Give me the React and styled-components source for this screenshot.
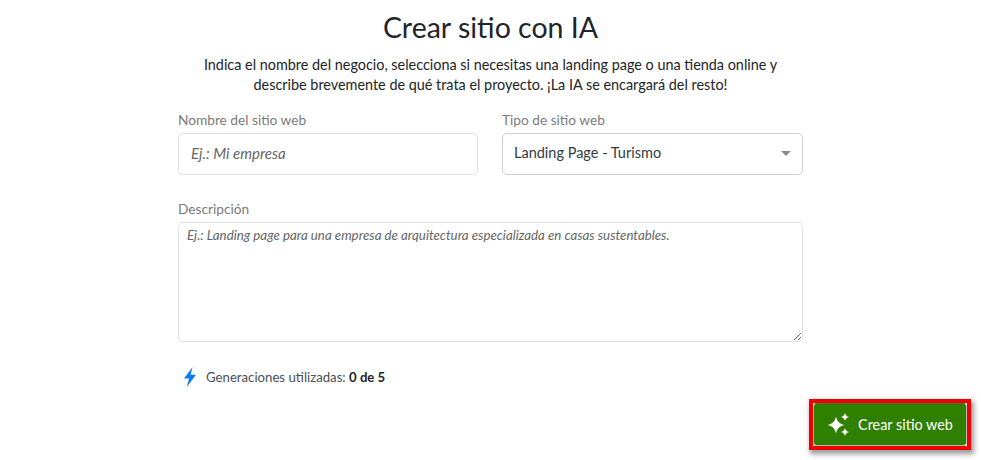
import React from "react";
import styled, { createGlobalStyle } from "styled-components";

const GlobalStyle = createGlobalStyle`
  html, body { margin: 0; padding: 0; background: #fff; }
  body { font-family: "Lato", "Open Sans", sans-serif; overflow: hidden; }
`;

const Page = styled.div`
  width: 981px;
  height: 460px;
  display: flex;
  flex-direction: column;
  align-items: center;
  padding-top: 8px;
  box-sizing: border-box;
`;

const Title = styled.h1`
  margin: 0;
  font-size: 28.5px;
  line-height: 38px;
  font-weight: 400;
  color: #212529;
`;

const Intro = styled.p`
  margin: 9px 0 0;
  width: 600px;
  text-align: center;
  font-size: 14.4px;
  line-height: 20px;
  color: #212529;
`;

const Form = styled.div`
  width: 625px;
  margin-top: 15px;
  display: flex;
  flex-direction: column;
`;

const Row = styled.div`
  display: grid;
  grid-template-columns: 300px 301px;
  column-gap: 24px;
`;

const Field = styled.div`
  display: flex;
  flex-direction: column;
`;

const Label = styled.label`
  font-size: 13.7px;
  line-height: 20px;
  color: #7b7b7b;
  margin-bottom: 3px;
`;

const TextInput = styled.input`
  height: 42px;
  box-sizing: border-box;
  border: 1px solid #dee2e6;
  border-radius: 5px;
  padding: 0 12px 3px;
  font: italic 15px "Lato", sans-serif;
  outline: none;
  &::placeholder { color: #666; opacity: 1; }
`;

const SelectBox = styled.div`
  height: 42px;
  box-sizing: border-box;
  border: 1px solid #ced0d6;
  border-radius: 5px;
  padding: 0 11px 3px;
  display: flex;
  align-items: center;
  justify-content: space-between;
  font-size: 14.5px;
  color: #343a40;
`;

const Caret = styled.span`
  width: 0;
  height: 0;
  margin-top: 1px;
  border-left: 5px solid transparent;
  border-right: 5px solid transparent;
  border-top: 5px solid #8a8a8a;
`;

const DescField = styled(Field)`
  margin-top: 24px;
`;

const TextArea = styled.textarea`
  height: 120px;
  box-sizing: border-box;
  border: 1px solid #dee2e6;
  border-radius: 5px;
  padding: 4px 8px;
  font: italic 13.3px "Lato", sans-serif;
  outline: none;
  display: block;
  &::placeholder { color: #666; opacity: 1; }
`;

const Usage = styled.div`
  display: flex;
  align-items: center;
  gap: 9px;
  margin-top: 25px;
  padding-left: 5px;
  font-size: 13.2px;
  line-height: 20px;
  color: #4a4f55;
  & b { font-weight: 700; color: #212529; }
`;

const Footer = styled.div`
  width: 100%;
  display: flex;
  justify-content: flex-end;
  padding-right: 10px;
  box-sizing: border-box;
  margin-top: 12px;
`;

// red highlight drawn round the button, square corners
const Highlight = styled.div`
  border: 4px solid #f00000;
  box-shadow: 2px 3px 5px 1px rgba(0, 0, 0, 0.4);
  display: flex;
`;

const GenerateButton = styled.button`
  width: 154px;
  height: 43px;
  box-sizing: border-box;
  display: flex;
  align-items: center;
  justify-content: center;
  gap: 8px;
  background: #2f8000;
  color: #fff;
  border: 1px solid #b9b9b9;
  border-top-color: #4c6b38;
  border-radius: 4px;
  font: 14.4px "Lato", sans-serif;
  padding: 0;
`;

const Bolt = () => (
  <svg width="14" height="20" viewBox="0 0 14 20">
    <path d="M9.5 0 L1 11.5 H6 L3.8 20 L13 7.8 H7.6 Z" fill="#0d7bf2" />
  </svg>
);

const Sparkles = () => (
  <svg width="23" height="23" viewBox="0 0 23 23" fill="#fff">
    <path d="M9 3.5 C10.2 8.6 12 10.4 17.5 12 C12 13.6 10.2 15.4 9 20.5 C7.8 15.4 6 13.6 0.5 12 C6 10.4 7.8 8.6 9 3.5 Z" />
    <path d="M18 0 C18.6 2.3 19.6 3.3 22.2 4 C19.6 4.7 18.6 5.7 18 8 C17.4 5.7 16.4 4.7 13.8 4 C16.4 3.3 17.4 2.3 18 0 Z" />
    <path d="M18 15 C18.6 17.3 19.6 18.3 22.2 19 C19.6 19.7 18.6 20.7 18 23 C17.4 20.7 16.4 19.7 13.8 19 C16.4 18.3 17.4 17.3 18 15 Z" />
  </svg>
);

const App = () => (
  <Page>
    <GlobalStyle />
    <Title>Crear sitio con IA</Title>
    <Intro>
      Indica el nombre del negocio, selecciona si necesitas una landing page o una tienda online y
      describe brevemente de qué trata el proyecto. ¡La IA se encargará del resto!
    </Intro>
    <Form>
      <Row>
        <Field>
          <Label>Nombre del sitio web</Label>
          <TextInput placeholder="Ej.: Mi empresa" />
        </Field>
        <Field>
          <Label>Tipo de sitio web</Label>
          <SelectBox>
            Landing Page - Turismo
            <Caret />
          </SelectBox>
        </Field>
      </Row>
      <DescField>
        <Label>Descripción</Label>
        <TextArea placeholder="Ej.: Landing page para una empresa de arquitectura especializada en casas sustentables." />
      </DescField>
      <Usage>
        <Bolt />
        <span>
          Generaciones utilizadas: <b>0 de 5</b>
        </span>
      </Usage>
    </Form>
    <Footer>
      <Highlight>
        <GenerateButton>
          <Sparkles />
          Crear sitio web
        </GenerateButton>
      </Highlight>
    </Footer>
  </Page>
);

export default App;
